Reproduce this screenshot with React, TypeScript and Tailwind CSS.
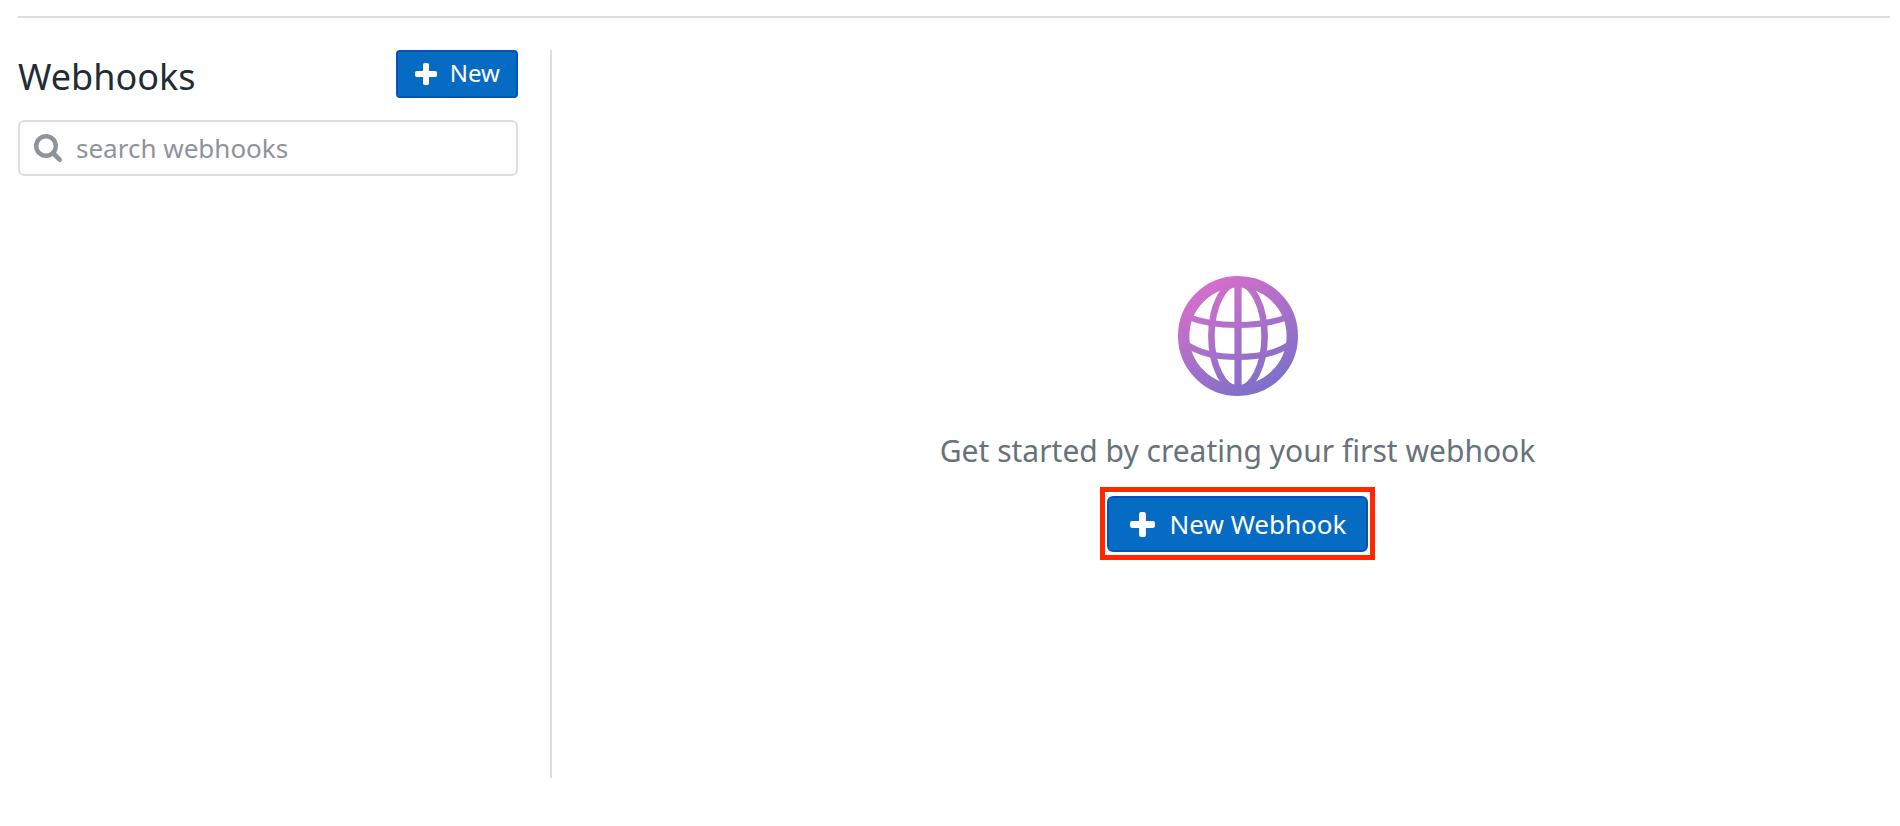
import React from "react";

function PlusIcon({ className }: { className: string }) {
  return (
    <svg viewBox="0 0 22 22" className={className} fill="currentColor" aria-hidden="true">
      <rect x="8" y="0" width="6" height="22" rx="1.8" />
      <rect x="0" y="8" width="22" height="6" rx="1.8" />
    </svg>
  );
}

function SearchIcon({ className }: { className: string }) {
  return (
    <svg
      viewBox="0 0 28 28"
      className={className}
      fill="none"
      stroke="currentColor"
      strokeLinecap="round"
      aria-hidden="true"
    >
      <circle cx="12" cy="12" r="9.8" strokeWidth="4.4" />
      <path d="M19.5 19.5 25.6 25.6" strokeWidth="4.6" />
    </svg>
  );
}

function GlobeIcon() {
  return (
    <svg viewBox="0 0 120 120" className="size-30" fill="none" stroke="url(#globe)" aria-hidden="true">
      <defs>
        <linearGradient id="globe" gradientUnits="userSpaceOnUse" x1="30" y1="8" x2="90" y2="112">
          <stop offset="0" stopColor="#d46fca" />
          <stop offset="1" stopColor="#7d70c9" />
        </linearGradient>
      </defs>
      <circle cx="60" cy="60" r="54.3" strokeWidth="11.4" />
      <ellipse cx="60" cy="60" rx="26.6" ry="53" strokeWidth="6.6" />
      <path d="M60 6V114" strokeWidth="7.2" />
      <path d="M8 40C22 46 42 49 60 49S98 46 112 40" strokeWidth="6.2" />
      <path d="M8 68C22 78 42 81 60 81S98 78 112 68" strokeWidth="6.2" />
    </svg>
  );
}

export default function App() {
  return (
    <div className="bg-white px-[18px] pt-4 pr-[10px] pb-12 font-['Noto_Sans',sans-serif]">
      <div className="flex border-t-2 border-[#dcdce2] pt-8">
        <aside className="w-[534px] shrink-0 border-r-2 border-[#dcdce2] pr-8">
          <div className="flex items-start justify-between">
            <h1 className="pt-1 text-[36px] leading-[46px] text-[#1f2d36]">Webhooks</h1>
            <button
              type="button"
              className="flex h-12 items-center gap-[13px] rounded border-2 border-[#0552bd] bg-[#066bc2] pr-4 pl-[17px] text-[24px] leading-8 text-white"
            >
              <PlusIcon className="size-[22px]" />
              <span className="pb-0.5">New</span>
            </button>
          </div>
          <label className="mt-5 flex h-14 items-center gap-3.5 rounded-md border-2 border-[#dcdce2] px-3.5 text-[#8f949b]">
            <SearchIcon className="size-7 shrink-0" />
            <input
              type="search"
              aria-label="search webhooks"
              placeholder="search webhooks"
              className="w-full bg-transparent text-[26px] leading-9 text-[#1f2d36] outline-none placeholder:text-[#8f949b]"
            />
          </label>
        </aside>
        <main className="flex min-h-[728px] flex-1 flex-col items-center pt-[226px] pl-[33px]">
          <GlobeIcon />
          <p className="mt-[31px] text-[30px] leading-12 text-[#67727a]">
            Get started by creating your first webhook
          </p>
          <div className="mt-3 border-5 border-[#ff2600] px-0.5 pt-1 pb-[3px]">
            <button
              type="button"
              className="flex h-14 items-center gap-[15px] rounded-md border-2 border-[#0552bd] bg-[#066bc2] pr-5 pl-[21px] text-[26px] leading-9 text-white"
            >
              <PlusIcon className="size-[25px]" />
              New Webhook
            </button>
          </div>
        </main>
      </div>
    </div>
  );
}
